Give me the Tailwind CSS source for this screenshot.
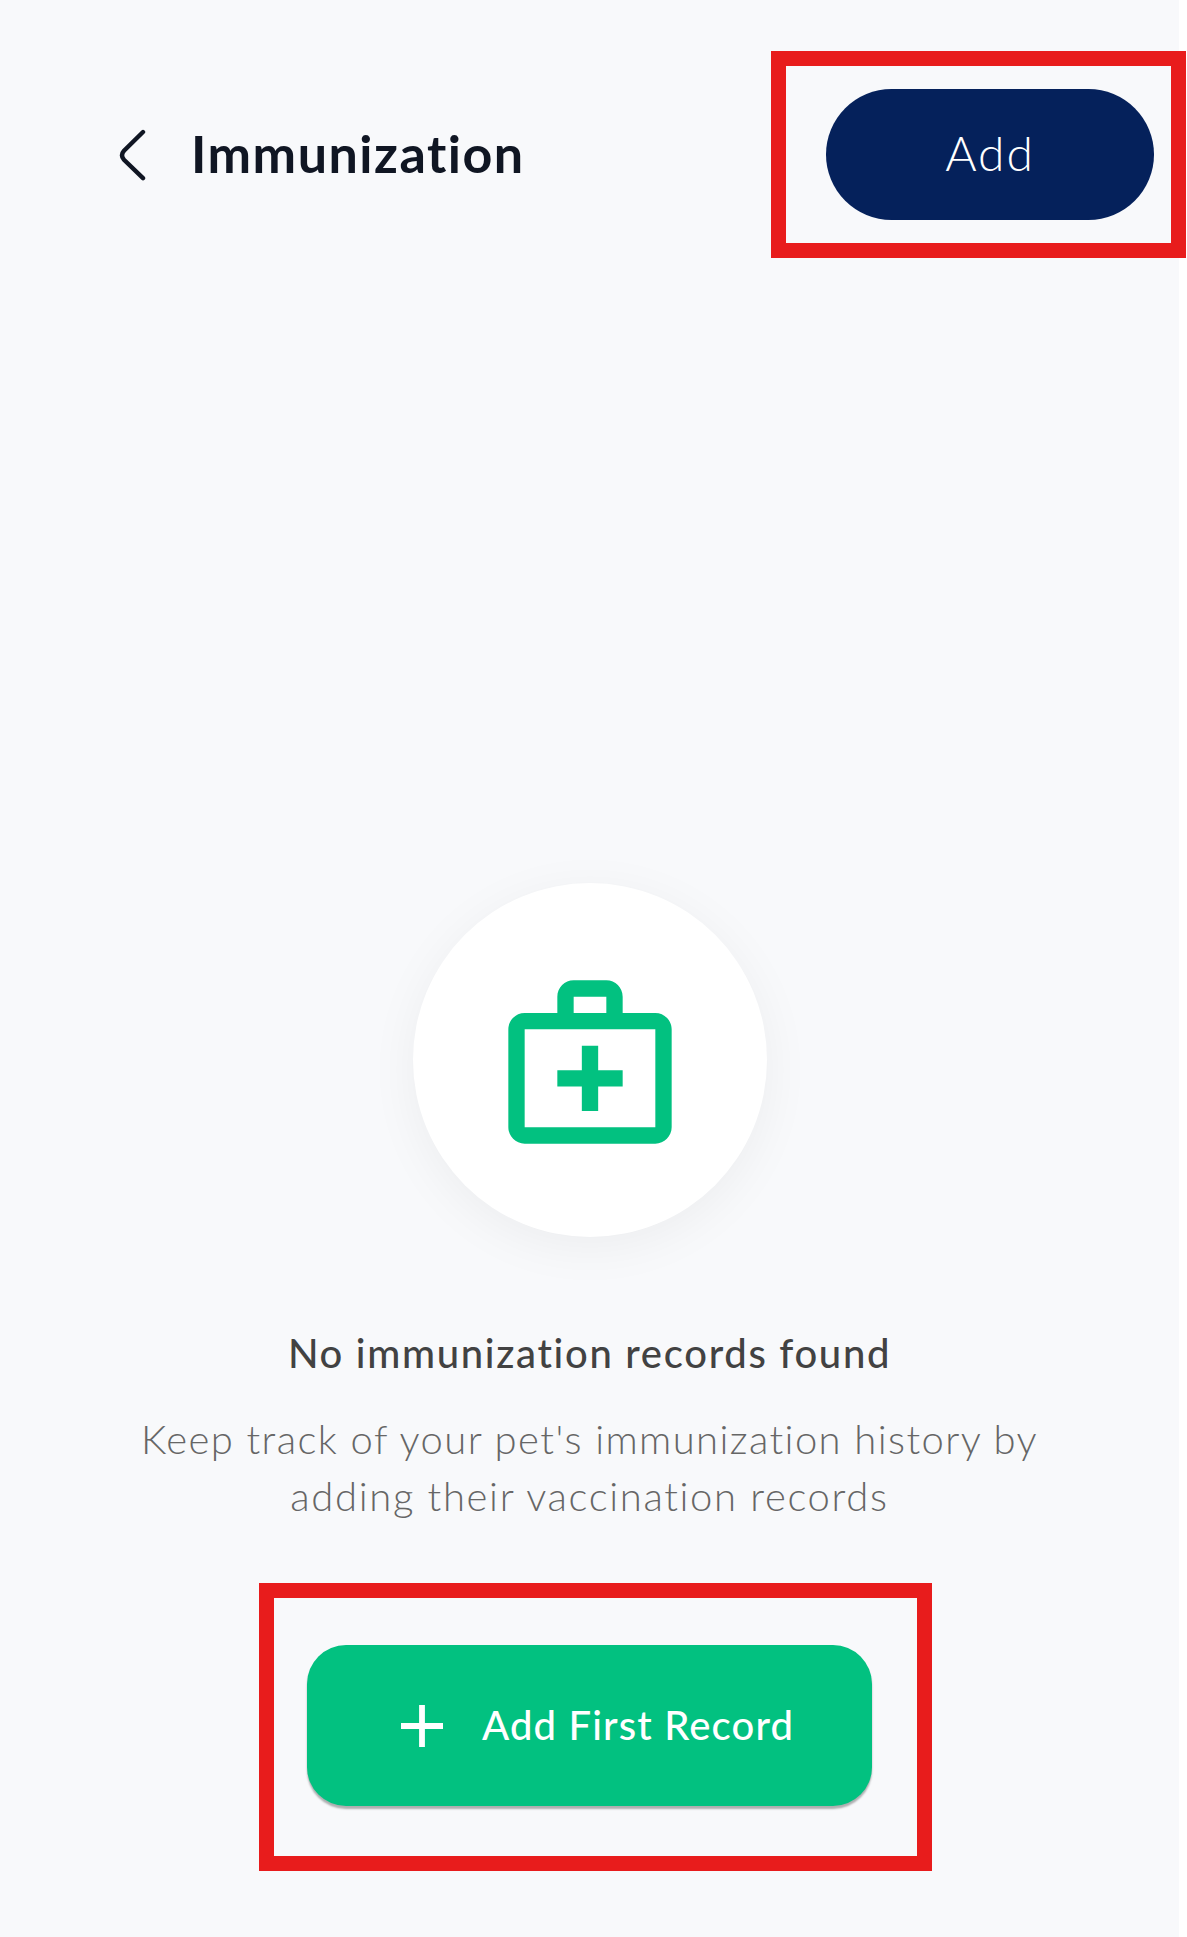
<!DOCTYPE html>
<html lang="en">
  <head>
    <meta charset="utf-8">
    <title>Immunization</title>
    <script src="https://cdn.jsdelivr.net/npm/@tailwindcss/browser@4"></script>
    <meta name="viewport" content="width=device-width">
  </head>

  <body class="bg-white overflow-hidden">
    <main class="flex flex-col w-[1179px] h-[1937px] pt-[51px] bg-[#f8f9fb] font-['Lato','Open_Sans',sans-serif]">

      <header class="flex items-center h-[207px] pl-[118px] -mr-[7px]">
        <a href="#" aria-label="Back">
          <svg class="w-[30px] h-[56px]" viewBox="0 0 30 56" fill="none" stroke="#101623" stroke-width="4.4" stroke-linecap="round">
            <path d="M25 5 L6 23.8 Q2 28.3 6 32.8 L25 51.2" />
          </svg>
        </a>
        <h1 class="ml-[43px] pb-[3px] text-[52px] leading-[60px] font-bold tracking-[1.5px] text-[#101623]">Immunization</h1>
        <div class="ml-auto w-[415px] h-[207px] border-[15px] border-[#e81c1c] pt-[23px] pl-[40px]">
          <button class="flex items-center justify-center w-[328px] h-[131px] pb-[3px] rounded-full bg-[#05215b] text-white text-[48px] leading-[56px] font-light tracking-[1.9px]">Add</button>
        </div>
      </header>

      <section class="flex flex-col items-center mt-[625px] text-center">
        <div class="flex items-center justify-center w-[354px] h-[354px] rounded-full bg-white shadow-[0_10px_50px_rgba(0,0,0,0.05)]">
          <!-- medical bag -->
          <svg class="w-[196px] h-[196px] mt-1" viewBox="0 0 24 24" fill="#02c180">
            <path d="M20 6h-4V4c0-1.1-.9-2-2-2h-4c-1.1 0-2 .9-2 2v2H4c-1.1 0-2 .9-2 2v12c0 1.1.9 2 2 2h16c1.1 0 2-.9 2-2V8c0-1.1-.9-2-2-2zM10 4h4v2h-4V4zm10 16H4V8h16v12z" />
            <path d="M13 10h-2v3H8v2h3v3h2v-3h3v-2h-3z" />
          </svg>
        </div>

        <h2 class="mt-[88px] text-[40px] leading-[57px] font-medium tracking-[1.68px] text-[#424242]">No immunization records found</h2>
        <p class="mt-[29px] text-[40px] leading-[57px] font-light tracking-[1.41px] text-[#666666] whitespace-nowrap">
          Keep track of your pet's immunization history by<br>
          <span class="tracking-[1.66px]">adding their vaccination records</span>
        </p>

        <div class="self-start ml-[259px] mt-[58px] w-[673px] h-[288px] border-[15px] border-[#e81c1c] pt-[47px] pl-[33px]">
          <button class="flex items-center w-[565px] h-[161px] pl-[94px] rounded-[39px] bg-[#02c180] text-white text-[40px] leading-[57px] font-medium tracking-[1.15px] shadow-[0_3px_2px_rgba(0,0,0,0.3)]">
            <svg class="w-[42px] h-[42px] mr-[39px]" viewBox="0 0 42 42" fill="none" stroke="currentColor" stroke-width="5.8">
              <path d="M21 0v42M0 21h42" />
            </svg>
            Add First Record
          </button>
        </div>
      </section>

    </main>
  </body>
</html>
